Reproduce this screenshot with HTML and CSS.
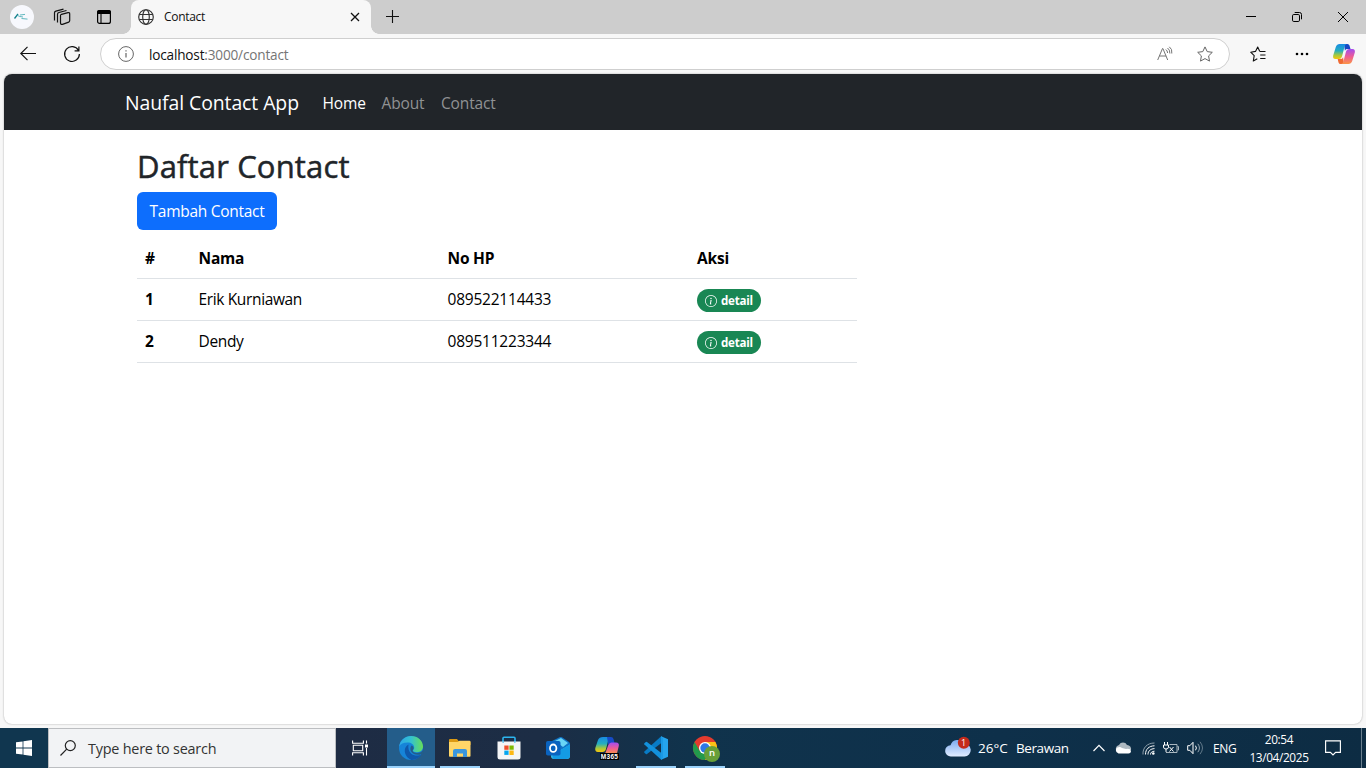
FILE: index.html
```html
<!DOCTYPE html>
<html lang="id">
<head>
<meta charset="utf-8">
<title>Contact</title>
<link rel="stylesheet" href="styles.css">
</head>
<body>
<div class="screen">
  <header class="tabstrip">
    <div class="strip-tools">
      <svg class="avatar" viewBox="0 0 24 24"><circle cx="12" cy="12" r="12" fill="#f7f8fd"/><path d="M4.500 13.500L8 9" fill="none" stroke="#12808c" stroke-width="1.300"/><path d="M7.500 10.500l2.500 1M10 10l5-.6M11.500 13.500l6 .6M10 11.500l3 .5" fill="none" stroke="#4fb0b8" stroke-width=".9"/></svg>
      <svg class="ic-workspaces" viewBox="0 0 18 18" fill="none" stroke="#111" stroke-width="1.200"><path d="M7.500 7.600q0-1 1-1.300l6.500-1.600q1.700-.3 1.700 1.200v6.700q0 1-1 1.500l-6.200 2.200q-2 .5-2-1.500zM4.500 14.500V6.200q0-1.300 1.400-1.700L13.500 2.500M1.500 12.500V4.800q0-1.300 1.400-1.700l7.600-2"/></svg>
      <svg class="ic-vtabs" viewBox="0 0 16 16"><rect x="1.600" y="1.600" width="12.800" height="12.800" rx="2" fill="none" stroke="#000" stroke-width="1.200"/><path d="M1 5V3q0-2 2-2h10q2 0 2 2v2z"/><path d="M5 5v9.500" stroke="#000" stroke-width="1.100"/></svg>
    </div>
    <div class="tab">
      <svg class="globe" viewBox="0 0 16 16" fill="none" stroke="#333" stroke-width="1.150"><circle cx="8" cy="8" r="7.300"/><ellipse cx="8" cy="8" rx="3.300" ry="7.300"/><path d="M1.300 5.500h13.400M1.300 10.500h13.400"/></svg>
      <span class="tab-title">Contact</span>
      <svg class="tab-close" viewBox="0 0 10 10" stroke="#111" stroke-width="1.300"><path d="M1 1l8 8M9 1l-8 8"/></svg>
    </div>
    <svg class="tab-new" viewBox="0 0 14 14" stroke="#111" stroke-width="1.100"><path d="M6.500 0v13M0 6.500h13"/></svg>
    <div class="window-buttons">
      <svg viewBox="0 0 12 12" fill="none" stroke="#000"><path d="M1 5.500h10"/></svg>
      <svg viewBox="0 0 12 12" fill="none" stroke="#000"><rect x="1.500" y="3.500" width="7" height="7" rx="1.300"/><path d="M3.700 1.500H8.500q2 0 2 2v4.800"/></svg>
      <svg viewBox="0 0 12 12" fill="none" stroke="#000"><path d="M1 1l10 10M11 1L1 11"/></svg>
    </div>
  </header>

  <div class="toolbar">
    <svg class="ic-back" viewBox="0 0 16 16" fill="none" stroke="#111" stroke-width="1.150"><path d="M16 7.500H.8M7.500 .8L.8 7.500l6.700 6.700"/></svg>
    <svg class="ic-reload" viewBox="0 0 16 16" fill="none" stroke="#111" stroke-width="1.200"><path d="M14.500 4.500A7.400 7.400 0 1 0 15.400 8M14.900.5v4.300h-4.300"/></svg>
    <div class="address">
      <svg class="ic-info" viewBox="0 0 16 16" fill="none" stroke="#666"><circle cx="8" cy="8" r="7.400"/><path d="M8 7v4.500M8 4.200v1.400" stroke-width="1.200"/></svg>
      <span class="url"><b>localhost</b>:3000/contact</span>
      <svg class="ic-read" viewBox="0 0 16 16" fill="none" stroke="#757575"><path d="M.7 14L5.500 2.500h.4L10.700 14M2.300 10h6.800M8.800 3.500q1.700 1.200 1.800 3.500M10.500 2q2.500 1.600 2.400 5.500M12.300.8q3.200 2.200 2.500 6.700"/></svg>
      <svg class="ic-star" viewBox="0 0 16 16" fill="none" stroke="#666"><path d="M8 .9l2.200 4.700 5.100.7-3.700 3.600.9 5.200L8 12.600l-4.500 2.500.9-5.200L.7 6.300l5.100-.7z" stroke-linejoin="round"/></svg>
    </div>
    <svg class="ic-fav" viewBox="0 0 16 16" fill="none" stroke="#111" stroke-width="1.100"><path d="M10 5.500H15.500M9.800 5.400L7.700 1 5.500 5.400.7 6.200l3.500 3.500L3.300 15l4-2.200M10.200 9h5.300M10.200 12.500h5.300" stroke-linejoin="round"/></svg>
    <svg class="ic-dots" viewBox="0 0 14 4"><circle cx="2" cy="2" r="1.300"/><circle cx="7" cy="2" r="1.300"/><circle cx="12" cy="2" r="1.300"/></svg>
    <svg class="ic-copilot" viewBox="0 0 22 20">
      <defs>
        <linearGradient id="cpa" x1="0" y1="0" x2="0" y2="1"><stop offset="0" stop-color="#188be4"/><stop offset=".45" stop-color="#25aebf"/><stop offset=".75" stop-color="#a7c93c"/><stop offset="1" stop-color="#f8c60c"/></linearGradient>
        <linearGradient id="cpb" x1="0" y1="0" x2="0" y2="1"><stop offset="0" stop-color="#a34cf0"/><stop offset=".5" stop-color="#ed5c95"/><stop offset="1" stop-color="#fb9546"/></linearGradient>
      </defs>
      <path d="M11 0h3.500q1.500 0 2 1.600L17.500 5h-3.700q-1.300 0-1.900 1.700z" fill="#1749c5"/>
      <path d="M6.700 0h7q-1.500.3-2 2L9 12.500Q8.300 15 6 15H2.500Q-.5 15 .2 11.500L2.800 3Q3.800 0 6.700 0z" fill="url(#cpa)"/>
      <path d="M11 20H7.500q-1.500 0-2-1.600L4.700 15h3.500q1.300 0 1.900-1.700z" fill="#ef6a33"/>
      <path d="M15.300 20h-7q1.500-.3 2-2L13 7.500Q13.700 5 16 5h3.500q3 0 2.300 3.500L19.200 17q-1 3-3.900 3z" fill="url(#cpb)"/>
    </svg>
  </div>

  <div class="viewport">
    <main class="page">
      <nav class="navbar">
        <a class="brand">Naufal Contact App</a>
        <a class="nav-link nav-home active">Home</a>
        <a class="nav-link nav-about">About</a>
        <a class="nav-link nav-contact">Contact</a>
      </nav>
      <section class="content">
        <h2 class="title">Daftar Contact</h2>
        <a class="btn">Tambah Contact</a>
        <div class="table">
          <div class="row head"><span>#</span><span>Nama</span><span>No HP</span><span>Aksi</span></div>
          <div class="row"><span class="num">1</span><span class="name">Erik Kurniawan</span><span class="phone">089522114433</span><span><a class="badge"><svg viewBox="0 0 16 16" fill="#fff"><path d="M8 15A7 7 0 1 1 8 1a7 7 0 0 1 0 14m0 1A8 8 0 1 0 8 0a8 8 0 0 0 0 16"/><path d="m8.930 6.588-2.290.287-.082.380.450.083c.294.070.352.176.288.469l-.738 3.468c-.194.897.105 1.319.808 1.319.545 0 1.178-.252 1.465-.598l.088-.416c-.2.176-.492.246-.686.246-.275 0-.375-.193-.304-.533zM9 4.500a1 1 0 1 1-2 0 1 1 0 0 1 2 0"/></svg>detail</a></span></div>
          <div class="row"><span class="num">2</span><span class="name">Dendy</span><span class="phone">089511223344</span><span><a class="badge"><svg viewBox="0 0 16 16" fill="#fff"><path d="M8 15A7 7 0 1 1 8 1a7 7 0 0 1 0 14m0 1A8 8 0 1 0 8 0a8 8 0 0 0 0 16"/><path d="m8.930 6.588-2.290.287-.082.380.450.083c.294.070.352.176.288.469l-.738 3.468c-.194.897.105 1.319.808 1.319.545 0 1.178-.252 1.465-.598l.088-.416c-.2.176-.492.246-.686.246-.275 0-.375-.193-.304-.533zM9 4.500a1 1 0 1 1-2 0 1 1 0 0 1 2 0"/></svg>detail</a></span></div>
        </div>
      </section>
    </main>
  </div>

  <footer class="taskbar">
    <div class="start"><svg viewBox="0 0 16 16" fill="#fff"><path d="M0 2.300L6.600 1.400v6.200H0zM7.400 1.300L16 0v7.600H7.400zM0 8.400h6.600v6.200L0 13.700zM7.400 8.400H16V16l-8.600-1.200z"/></svg></div>
    <div class="search">
      <svg viewBox="0 0 16 16" fill="none" stroke="#222" stroke-width="1.200"><circle cx="10.300" cy="5.600" r="5"/><path d="M6.700 9.200L.5 15.500"/></svg>
      <span>Type here to search</span>
    </div>
    <div class="taskview"><svg viewBox="0 0 17 16" fill="none" stroke="#fff" stroke-width="1.100"><path d="M.6.500v2.700h10.800V.5M.6 15.500v-2.700h10.800v2.700M1.300 5.200h9.400v5.600H1.300zM14.500.5v3M14.500 8v7.500"/><path d="M13 4.500h3v3h-3z" fill="#fff" stroke="none"/></svg></div>
    <div class="apps">
      <div class="app current"><svg viewBox="0 0 24 24">
        <defs><linearGradient id="eg" x1="0" x2="1"><stop offset="0" stop-color="#2ba7e8"/><stop offset=".5" stop-color="#34c1cf"/><stop offset="1" stop-color="#67df57"/></linearGradient></defs>
        <circle cx="12" cy="12" r="12" fill="#1684d8"/>
        <path d="M.2 10.500C1 4.500 6 0 12 0c7 0 12 5 12 10.500 0 3.500-2.500 5.700-6 5.700-2.700 0-4-.8-4-1.700 0-.7 1.200-1.100 1.200-3C15.200 8.500 12 6.500 8.700 6.500 4.500 6.500 1.500 8 .2 10.500z" fill="url(#eg)"/>
        <path d="M9.500 8.500C6.800 10 5.500 12.500 5.800 15.500c.4 4 3.200 7 6.500 8.400 4 .2 8-1.900 10.200-5.400-2.500 1.300-7.500 1.800-10.500-1-2.500-2.300-3-5.500-2.500-9z" fill="#0f58ab"/>
        <path d="M24.500 13.500c-1.500 2.500-4 3.500-6.500 3.500-2.700 0-4.400-1-4.400-2.200 0-.8 1-1.400 1-2.800 0-1.200-.8-2.200-2-2.600-1.800 1.800-1.600 5.200.3 7.200 2.500 2.600 6.700 2.800 9.800 1.300l1.800-1z" fill="#245d8a"/>
      </svg></div>
      <div class="app open"><svg viewBox="0 0 24 24"><path d="M1 5V4q0-1 1-1h7l2 2.500h10.500q1 0 1 1V9H1z" fill="#dc9a14"/><path d="M1 6h8.500l2-1.300h10q1 0 1 1V20q0 .8-.8.8H1.800q-.8 0-.8-.8z" fill="#ffd668"/><path d="M5 21v-6q0-2 2-2h10q2 0 2 2v6h-4v-3.500H9V21z" fill="#3a96dd"/></svg></div>
      <div class="app"><svg viewBox="0 0 24 24"><path d="M6 6V2.300q0-1 1-1h10q1 0 1 1V6" fill="none" stroke="#2cb5ef" stroke-width="1.600"/><path d="M.5 5.500h23V21q0 2.500-2.500 2.500H3Q.5 23.500.5 21z" fill="#f4f5f6"/><path d="M5.500 5.500h1.300v1.300H5.500zM17.200 5.500h1.300v1.300h-1.300z" fill="#2cb5ef"/><path d="M7.300 9.500h4.300v4.300H7.300z" fill="#ee4f2a"/><path d="M12.400 9.500h4.300v4.300h-4.300z" fill="#7fba00"/><path d="M7.300 14.600h4.300v4.300H7.300z" fill="#05a6f0"/><path d="M12.400 14.600h4.300v4.300h-4.300z" fill="#fdb813"/></svg></div>
      <div class="app"><svg viewBox="0 0 24 24"><path d="M6 5l8-4q1-.3 2 .2L23 6q1 .8 1 2v10H6z" fill="#1174c6"/><path d="M9 5l8 6 5-4-7-5z" fill="#69d5f6"/><path d="M24 8.500V20q0 3-3 3H8q-3 0-3-3v-3l8-2z" fill="#35c0ef"/><path d="M24 8.500L7 18.500q-1 2 0 4l1 .5h12q4-.3 4-4z" fill="#149be4"/><rect y="5" width="14.500" height="14.500" rx="1.800" fill="#0a63bf"/><ellipse cx="7.200" cy="12.200" rx="3.200" ry="3.700" fill="none" stroke="#fff" stroke-width="1.800"/></svg></div>
      <div class="app m365"><svg viewBox="0 0 24 24">
        <path d="M8 1h8q-2 .5-2.600 2.500L11 13q-.8 3-3.500 3H3Q-.3 16 .3 12l2.700-8Q4.200 1 8 1z" fill="url(#cpa)"/><path d="M12 1h4q2 0 2.500 2L19.500 7h-4q-1.500 0-2.200 2z" fill="#174bc7"/><path d="M10 18l3.300-9q.8-2.500 3.200-2.500H21q3.500 0 2.800 3.500l-2 8z" fill="url(#cpb)"/></svg><span class="m365-tag">M365</span></div>
      <div class="app open"><svg viewBox="0 0 24 24"><path d="M17.200.2L24 3.300v17.400l-6.800 3.100z" fill="#25a5ee"/><path d="M17.200.2L.4 15.500q-.6.600 0 1.200l1.400 1.300q.6.400 1.200 0L18 6.600z" fill="#087bc5"/><path d="M17.200 23.800L.4 8.500q-.6-.6 0-1.200L1.800 6q.6-.4 1.200 0L18 17.400z" fill="#1391dc"/><path d="M17 0l2 2v20l-2 2z" fill="#1a99e5"/></svg></div>
      <div class="app open chrome"><svg viewBox="0 0 24 24"><circle cx="12" cy="12" r="12" fill="#e33b2e"/><path d="M12 6h10.400A12 12 0 0 1 12 24l5.200-9z" fill="#fbc116"/><path d="M1.600 6A12 12 0 0 0 12 24l5.200-9H6.800z" fill="#229a4c"/><circle cx="12" cy="12" r="6" fill="#fff"/><circle cx="12" cy="12" r="4.700" fill="#2d78e6"/></svg><span class="profile">n</span></div>
    </div>
    <div class="tray">
      <div class="weather"><svg viewBox="0 0 26 24"><defs><linearGradient id="cl" x1="0" y1="0" x2="0" y2="1"><stop offset="0" stop-color="#7cabf0"/><stop offset="1" stop-color="#e1ecff"/></linearGradient></defs><path d="M6 20.500a5.600 5.600 0 0 1-.5-11.200A7.500 7.500 0 0 1 19 7.500a6.500 6.500 0 0 1 .5 13z" fill="url(#cl)"/><circle cx="18.800" cy="6.700" r="6" fill="#c42b1c"/></svg><span class="alert">1</span></div>
      <span class="temp">26°C</span>
      <span class="cond">Berawan</span>
      <svg class="t-chev" viewBox="0 0 12 8" fill="none" stroke="#fff" stroke-width="1.200"><path d="M.5 7L6 1.300 11.500 7"/></svg>
      <svg class="t-cloud" viewBox="0 0 16 12"><path d="M1 8a4 4 0 0 1 3-5 4.500 4.500 0 0 1 8 0 4 4 0 0 1 4 5z" fill="#aeb9c1"/><path d="M3.500 11.500a3.200 3.200 0 0 1 0-6.300 4 4 0 0 1 3.500.7L11 7q4.500-.8 5 2.300-.2 2.200-2.500 2.200z" fill="#fff"/></svg>
      <svg class="t-wifi" viewBox="0 0 13 13" fill="none" stroke="#fff"><path d="M1 12.500C.5 6 5 1 12.500 1" stroke="#8d9eaa"/><path d="M3.500 12.500C3.500 7 7 4 12.500 3.800M6 12.500C6 9 8.500 6.800 12.500 6.600M8.500 12.500c0-2 1.500-3.200 4-3.300"/><circle cx="11.300" cy="11.500" r="1.300" fill="#fff" stroke="none"/></svg>
      <svg class="t-batt" viewBox="0 0 17 13" fill="none" stroke="#fff"><path d="M1.500 0v3M4.500 0v3M.5 3h5v2Q5.500 7 3 7 .5 7 .5 5zM3 7v2.500q0 1 1 1h.5M6.500 5l4 4.500M10.500 5l-4 4.500"/><path d="M6.500 2.500h7.500v8H3.500M14.500 4.500h1v3.500h-1" stroke="#a8b6bf"/></svg>
      <svg class="t-vol" viewBox="0 0 17 14" fill="none" stroke="#fff"><path d="M.7 4.700h2.200L6 1.300v11.400L2.900 9.300H.7zM8.500 4.700q1.800 2.300 0 4.600"/><path d="M10.800 2.800q3.300 4.200 0 8.400" stroke="#93a4b0"/><path d="M13 .8q5 6.200 0 12.400" stroke="#62798a"/></svg>
      <span class="lang">ENG</span>
      <div class="clock"><span class="time">20:54</span><span class="date">13/04/2025</span></div>
      <svg class="t-note" viewBox="0 0 16 16" fill="none" stroke="#fff" stroke-width="1.150"><path d="M.6.800h14.800v11.500h-4.800L8 15l-2.600-2.700H.6z"/></svg>
      <i class="peek"></i>
    </div>
  </footer>
</div>
</body>
</html>
```
FILE: styles.css
```css
* { box-sizing: border-box; }
body { margin: 0; overflow: hidden; font-family: "Open Sans", "Noto Sans", sans-serif; }
svg { display: block; flex: none; overflow: visible; }
span, a { white-space: nowrap; }
.screen { width: 1366px; height: 768px; display: flex; flex-direction: column; background: #f7f7f7; }

.tabstrip { height: 34px; flex: none; background: #cdcdcd; display: flex; align-items: center; }
.strip-tools { width: 131px; height: 34px; padding-left: 10px; display: flex; align-items: center; }
.avatar { width: 24px; height: 24px; }
.ic-workspaces { width: 18px; height: 18px; margin-left: 19px; }
.ic-vtabs { width: 16px; height: 16px; margin-left: 25px; }
.tab { position: relative; width: 240px; height: 34px; background: #f7f7f7; border-radius: 8px 8px 0 0; display: flex; align-items: center; padding: 0 11px 0 7px; }
.tab::before, .tab::after { content: ""; position: absolute; bottom: 0; width: 8px; height: 8px; }
.tab::before { left: -8px; background: radial-gradient(circle at 0 0, #cdcdcd 7.5px, #f7f7f7 8px); }
.tab::after { right: -8px; background: radial-gradient(circle at 100% 0, #cdcdcd 7.5px, #f7f7f7 8px); }
.globe { width: 16px; height: 16px; }
.tab-title { margin-left: 10px; font-size: 12px; line-height: 16px; color: #111; letter-spacing: -.3px; }
.tab-close { width: 10px; height: 10px; margin-left: auto; }
.tab-new { width: 14px; height: 14px; margin-left: 15px; }
.window-buttons { margin-left: auto; display: flex; gap: 34px; padding-right: 17px; }
.window-buttons svg { width: 12px; height: 12px; }

.toolbar { height: 40px; flex: none; display: flex; align-items: center; padding-left: 20px; }
.ic-back { width: 16px; height: 16px; }
.ic-reload { width: 16px; height: 16px; margin-left: 28px; }
.address { width: 1130px; height: 32px; margin-left: 20px; border: 1px solid #cfcfcf; border-radius: 16px; background: #fff; display: flex; align-items: center; padding: 0 16px 0 17px; }
.ic-info { width: 16px; height: 16px; }
.url { margin-left: 15px; padding-top: 1px; font-size: 13.6px; line-height: 20px; color: #757575; letter-spacing: -.18px; }
.url b { font-weight: 400; color: #111; }
.ic-read { width: 16px; height: 16px; margin-left: auto; }
.ic-star { width: 16px; height: 16px; margin-left: 24px; }
.ic-fav { width: 16px; height: 16px; margin-left: 20px; }
.ic-dots { width: 14px; height: 4px; margin-left: 29px; }
.ic-copilot { width: 22px; height: 20px; margin-left: 24px; }

.viewport { height: 654px; flex: none; padding: 0 4px 4px; }
.page { height: 650px; background: #fff; border-radius: 8px; overflow: hidden; box-shadow: 0 0 2px rgba(0,0,0,.35); }
.navbar { height: 56px; background: #212529; display: flex; align-items: center; padding: 1px 0 0 121px; font-size: 15.5px; color: #fff; line-height: 24px; }
.brand { width: 197.5px; font-size: 19.4px; line-height: 30px; letter-spacing: -.07px; }
.nav-link { color: #909294; letter-spacing: -.15px; }
.nav-link.active { color: #fff; }
.nav-home { width: 59px; }
.nav-about { width: 59.500px; }
.content { padding: 17px 0 0 133px; }
.title { margin: 0 0 7px; font-size: 31px; line-height: 38px; font-weight: 400; color: #212529; letter-spacing: .15px; -webkit-text-stroke: .5px #212529; }
.btn { display: flex; align-items: center; justify-content: center; width: 140px; height: 38px; border-radius: 6px; background: #0d6efd; color: #fff; font-size: 15.5px; letter-spacing: -.28px; }
.table { width: 720px; margin-top: 8px; font-size: 15.5px; color: #000; }
.row { height: 42px; display: grid; grid-template-columns: 53.5px 249px 249.500px 168px; align-items: center; border-bottom: 1px solid #dee2e6; line-height: 24px; }
.row > span { padding: 0 0 1px 8px; }
.head { height: 41px; font-weight: 700; letter-spacing: -.2px; }
.row.head > span { padding-bottom: 0; }
.num { font-weight: 700; }
.name { letter-spacing: -.36px; }
.phone { letter-spacing: -.22px; }
.badge { display: flex; align-items: center; width: 64px; height: 23px; margin-top: 3px; padding-left: 8px; border-radius: 12px; background: #198754; color: #fff; font-size: 11.6px; font-weight: 700; line-height: 12px; letter-spacing: -.25px; }
.badge svg { width: 12px; height: 12px; margin-right: 4px; }

.taskbar { height: 40px; flex: none; display: flex; color: #fff; background: linear-gradient(90deg, #10364f 0, #10364f 48px, #1e2c44 336px, #1c2d45 540px, #10334c 690px, #0e304a 1000px, #0d2c43 1366px); }
.start, .taskview { width: 48px; display: flex; align-items: center; justify-content: center; }
.start svg { width: 16px; height: 16px; }
.search { width: 288px; background: #f2f3f5; border: 1px solid #bcbec1; display: flex; align-items: center; padding-left: 11px; }
.search svg { width: 16px; height: 16px; }
.search span { margin-left: 12px; font-size: 14.4px; color: #333; letter-spacing: -.22px; }
.taskview svg { width: 17px; height: 16px; }
.apps { margin-left: 3px; display: flex; gap: 1px; }
.app { position: relative; width: 48px; height: 40px; display: flex; align-items: center; justify-content: center; }
.app svg { width: 24px; height: 24px; }
.app.current { background: #245d8a; border-bottom: 2px solid #9ad2fb; padding-top: 2px; }
.app.open::after { content: ""; position: absolute; left: 4px; right: 4px; bottom: 0; height: 2px; background: #9ad2fb; }
.m365-tag { position: absolute; left: 17px; top: 25px; width: 19px; height: 7px; background: #000; font: 700 6.500px/7px "Liberation Sans", sans-serif; text-align: center; letter-spacing: .3px; }
.profile { position: absolute; left: 23px; top: 18px; width: 16px; height: 16px; border-radius: 50%; background: #689f38; font-size: 9.5px; font-weight: 600; line-height: 14px; text-align: center; }
.tray { margin-left: auto; width: 421px; display: grid; grid-template-columns: 33px 38px 77px 22px 27px 21px 24px 26px 32px 68px 40px 8px 5px; align-items: center; font-size: 13.5px; }
.weather { position: relative; }
.weather svg { width: 26px; height: 24px; }
.alert { position: absolute; left: 16px; top: 2px; width: 5px; font-size: 9px; line-height: 10px; text-align: center; }
.cond { letter-spacing: -.42px; }
.t-chev { width: 12px; height: 8px; }
.t-cloud { width: 16px; height: 12px; }
.t-wifi { width: 13px; height: 13px; }
.t-batt { width: 17px; height: 13px; }
.t-vol { width: 17px; height: 14px; }
.lang { font-size: 12px; letter-spacing: -.4px; }
.clock { display: flex; flex-direction: column; align-items: center; font-size: 11.8px; line-height: 18px; letter-spacing: -.35px; }
.t-note { width: 16px; height: 16px; justify-self: center; }
.peek { grid-column: 13; width: 1px; height: 40px; background: #6a7f8e; }
```
